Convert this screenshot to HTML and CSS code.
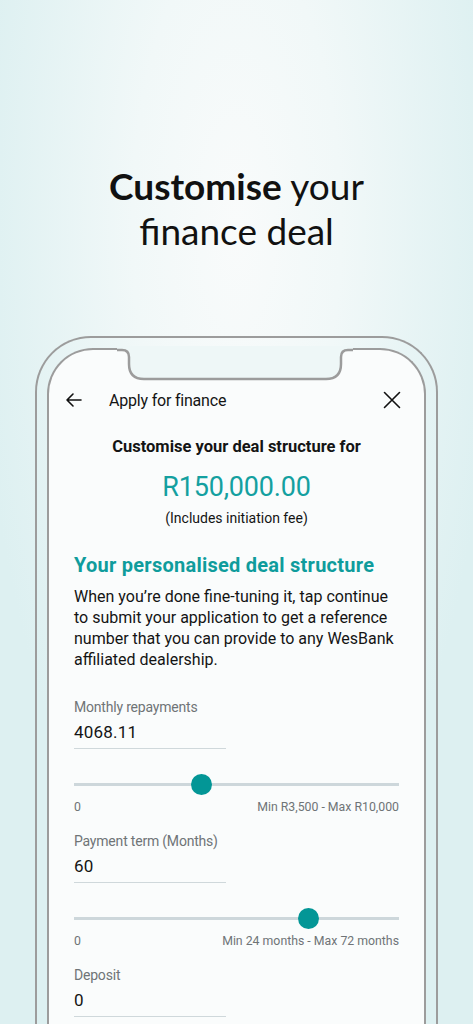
FILE: index.html
```html
<!DOCTYPE html>
<html>
<head>
    <title>Customise your finance deal</title>
    <link rel="stylesheet" href="styles.css">
</head>
<body>
    <div class="page">
        <div class="hero">
            <h1 class="hero-title"><b>Customise</b> your<br>finance deal</h1>
        </div>

        <div class="phone">
            <div class="screen">
                <!-- notch over the top edge of the screen -->
                <svg class="notch" width="236" height="36" viewBox="0 0 236 36">
                    <path d="M0,0 H236 V4 H231 Q224,4 224,11 V18 Q224,33 209,33 H27 Q12,33 12,18 V11 Q12,4 5,4 H0 Z" fill="#eef7f7"/>
                    <path d="M0,4 H5 Q12,4 12,11 V18 Q12,33 27,33 H209 Q224,33 224,18 V11 Q224,4 231,4 H236" fill="none" stroke="#9c9c9c" stroke-width="2.5"/>
                </svg>

                <div class="app-bar">
                    <svg class="icon" width="18" height="18" viewBox="0 0 18 18">
                        <path d="M16 9 H2 M8 3 L2 9 L8 15" fill="none" stroke="#111" stroke-width="1.6" stroke-linecap="round" stroke-linejoin="round"/>
                    </svg>
                    <span class="app-title">Apply for finance</span>
                    <svg class="icon close" width="18" height="18" viewBox="0 0 18 18">
                        <path d="M1.5 1.5 L16.5 16.5 M16.5 1.5 L1.5 16.5" fill="none" stroke="#111" stroke-width="1.6" stroke-linecap="round"/>
                    </svg>
                </div>

                <div class="summary">
                    <div class="summary-label">Customise your deal structure for</div>
                    <div class="summary-amount">R150,000.00</div>
                    <div class="summary-note">(Includes initiation fee)</div>
                </div>

                <h2 class="section-title">Your personalised deal structure</h2>
                <p class="section-text">When you’re done fine-tuning it, tap continue to submit your application to get a reference number that you can provide to any WesBank affiliated dealership.</p>

                <div class="field">
                    <div class="field-label">Monthly repayments</div>
                    <div class="field-value">4068.11</div>
                </div>
                <div class="slider">
                    <div class="track"><span class="thumb" style="left: 39%;"></span></div>
                    <div class="slider-range"><span>0</span><span>Min R3,500 - Max R10,000</span></div>
                </div>

                <div class="field">
                    <div class="field-label">Payment term (Months)</div>
                    <div class="field-value">60</div>
                </div>
                <div class="slider">
                    <div class="track"><span class="thumb" style="left: 72%;"></span></div>
                    <div class="slider-range"><span>0</span><span>Min 24 months - Max 72 months</span></div>
                </div>

                <div class="field">
                    <div class="field-label">Deposit</div>
                    <div class="field-value">0</div>
                </div>
            </div>
        </div>
    </div>
</body>
</html>
```

FILE: styles.css
```css
html, body {
    margin: 0;
    padding: 0;
}

body {
    width: 473px;
    height: 1024px;
    overflow: hidden;
    font-family: Roboto, "Liberation Sans", sans-serif;
    color: #141414;
    background: radial-gradient(ellipse 55% 70% at 50% 22%, #f9fbfb 0%, #f1f8f8 40%, #ddf0f1 100%);
}

.page {
    height: 1024px;
    overflow: hidden;
}

.hero {
    height: 336px;
    box-sizing: border-box;
    padding-top: 163px;
    text-align: center;
}

.hero-title {
    margin: 0;
    font-family: Lato, "Open Sans", sans-serif;
    font-weight: 400;
    font-size: 37px;
    line-height: 45px;
    color: #111;
}

.hero-title b {
    font-weight: 700;
}

.phone {
    margin: 0 35px;
    padding: 10px 10px 0;
    height: 700px;
    border: 2.5px solid #9c9c9c;
    border-bottom: none;
    border-radius: 56px 56px 0 0;
}

.screen {
    position: relative;
    height: 700px;
    padding: 0 25px;
    background: #fafcfc;
    border: 2.5px solid #9c9c9c;
    border-bottom: none;
    border-radius: 46px 46px 0 0;
}

.notch {
    position: absolute;
    top: -4px;
    left: 68px;
}

.app-bar {
    display: flex;
    align-items: center;
    height: 24px;
    padding-top: 38px;
    margin: 0 -2px 0 -9px;
}

.app-title {
    flex: 1;
    margin-left: 26px;
    font-size: 16px;
    letter-spacing: -0.2px;
}

.summary {
    margin-top: 25px;
    text-align: center;
}

.summary-label {
    font-size: 16.5px;
    font-weight: 700;
    letter-spacing: 0;
    line-height: 20px;
}

.summary-amount {
    margin-top: 14px;
    font-size: 27px;
    line-height: 32px;
    color: #14a0a0;
    letter-spacing: -0.2px;
}

.summary-note {
    margin-top: 6px;
    font-size: 14px;
    line-height: 18px;
    letter-spacing: 0;
}

.section-title {
    margin: 26px 0 0;
    font-size: 20px;
    line-height: 24px;
    font-weight: 700;
    color: #0f9c9c;
    letter-spacing: 0.25px;
}

.section-text {
    margin: 9px 0 0;
    font-size: 16px;
    line-height: 21px;
    letter-spacing: 0;
}

.field {
    width: 152px;
    border-bottom: 1px solid #cfd8db;
}

.section-text + .field {
    margin-top: 28px;
}

.field-label {
    font-size: 14px;
    line-height: 18px;
    color: #6f7477;
    letter-spacing: -0.2px;
}

.field-value {
    margin-top: 6px;
    padding-bottom: 6px;
    font-size: 17px;
    line-height: 20px;
    letter-spacing: 0.2px;
}

.slider {
    padding-top: 34px;
    margin-bottom: 17px;
}

.track {
    position: relative;
    height: 3px;
    background: #cdd7db;
}

.thumb {
    position: absolute;
    top: -9px;
    width: 21px;
    height: 21px;
    margin-left: -10px;
    border-radius: 50%;
    background: #039696;
}

.slider-range {
    display: flex;
    justify-content: space-between;
    margin-top: 13px;
    font-size: 12.3px;
    line-height: 16px;
    color: #6f7477;
    letter-spacing: 0;
}
```
